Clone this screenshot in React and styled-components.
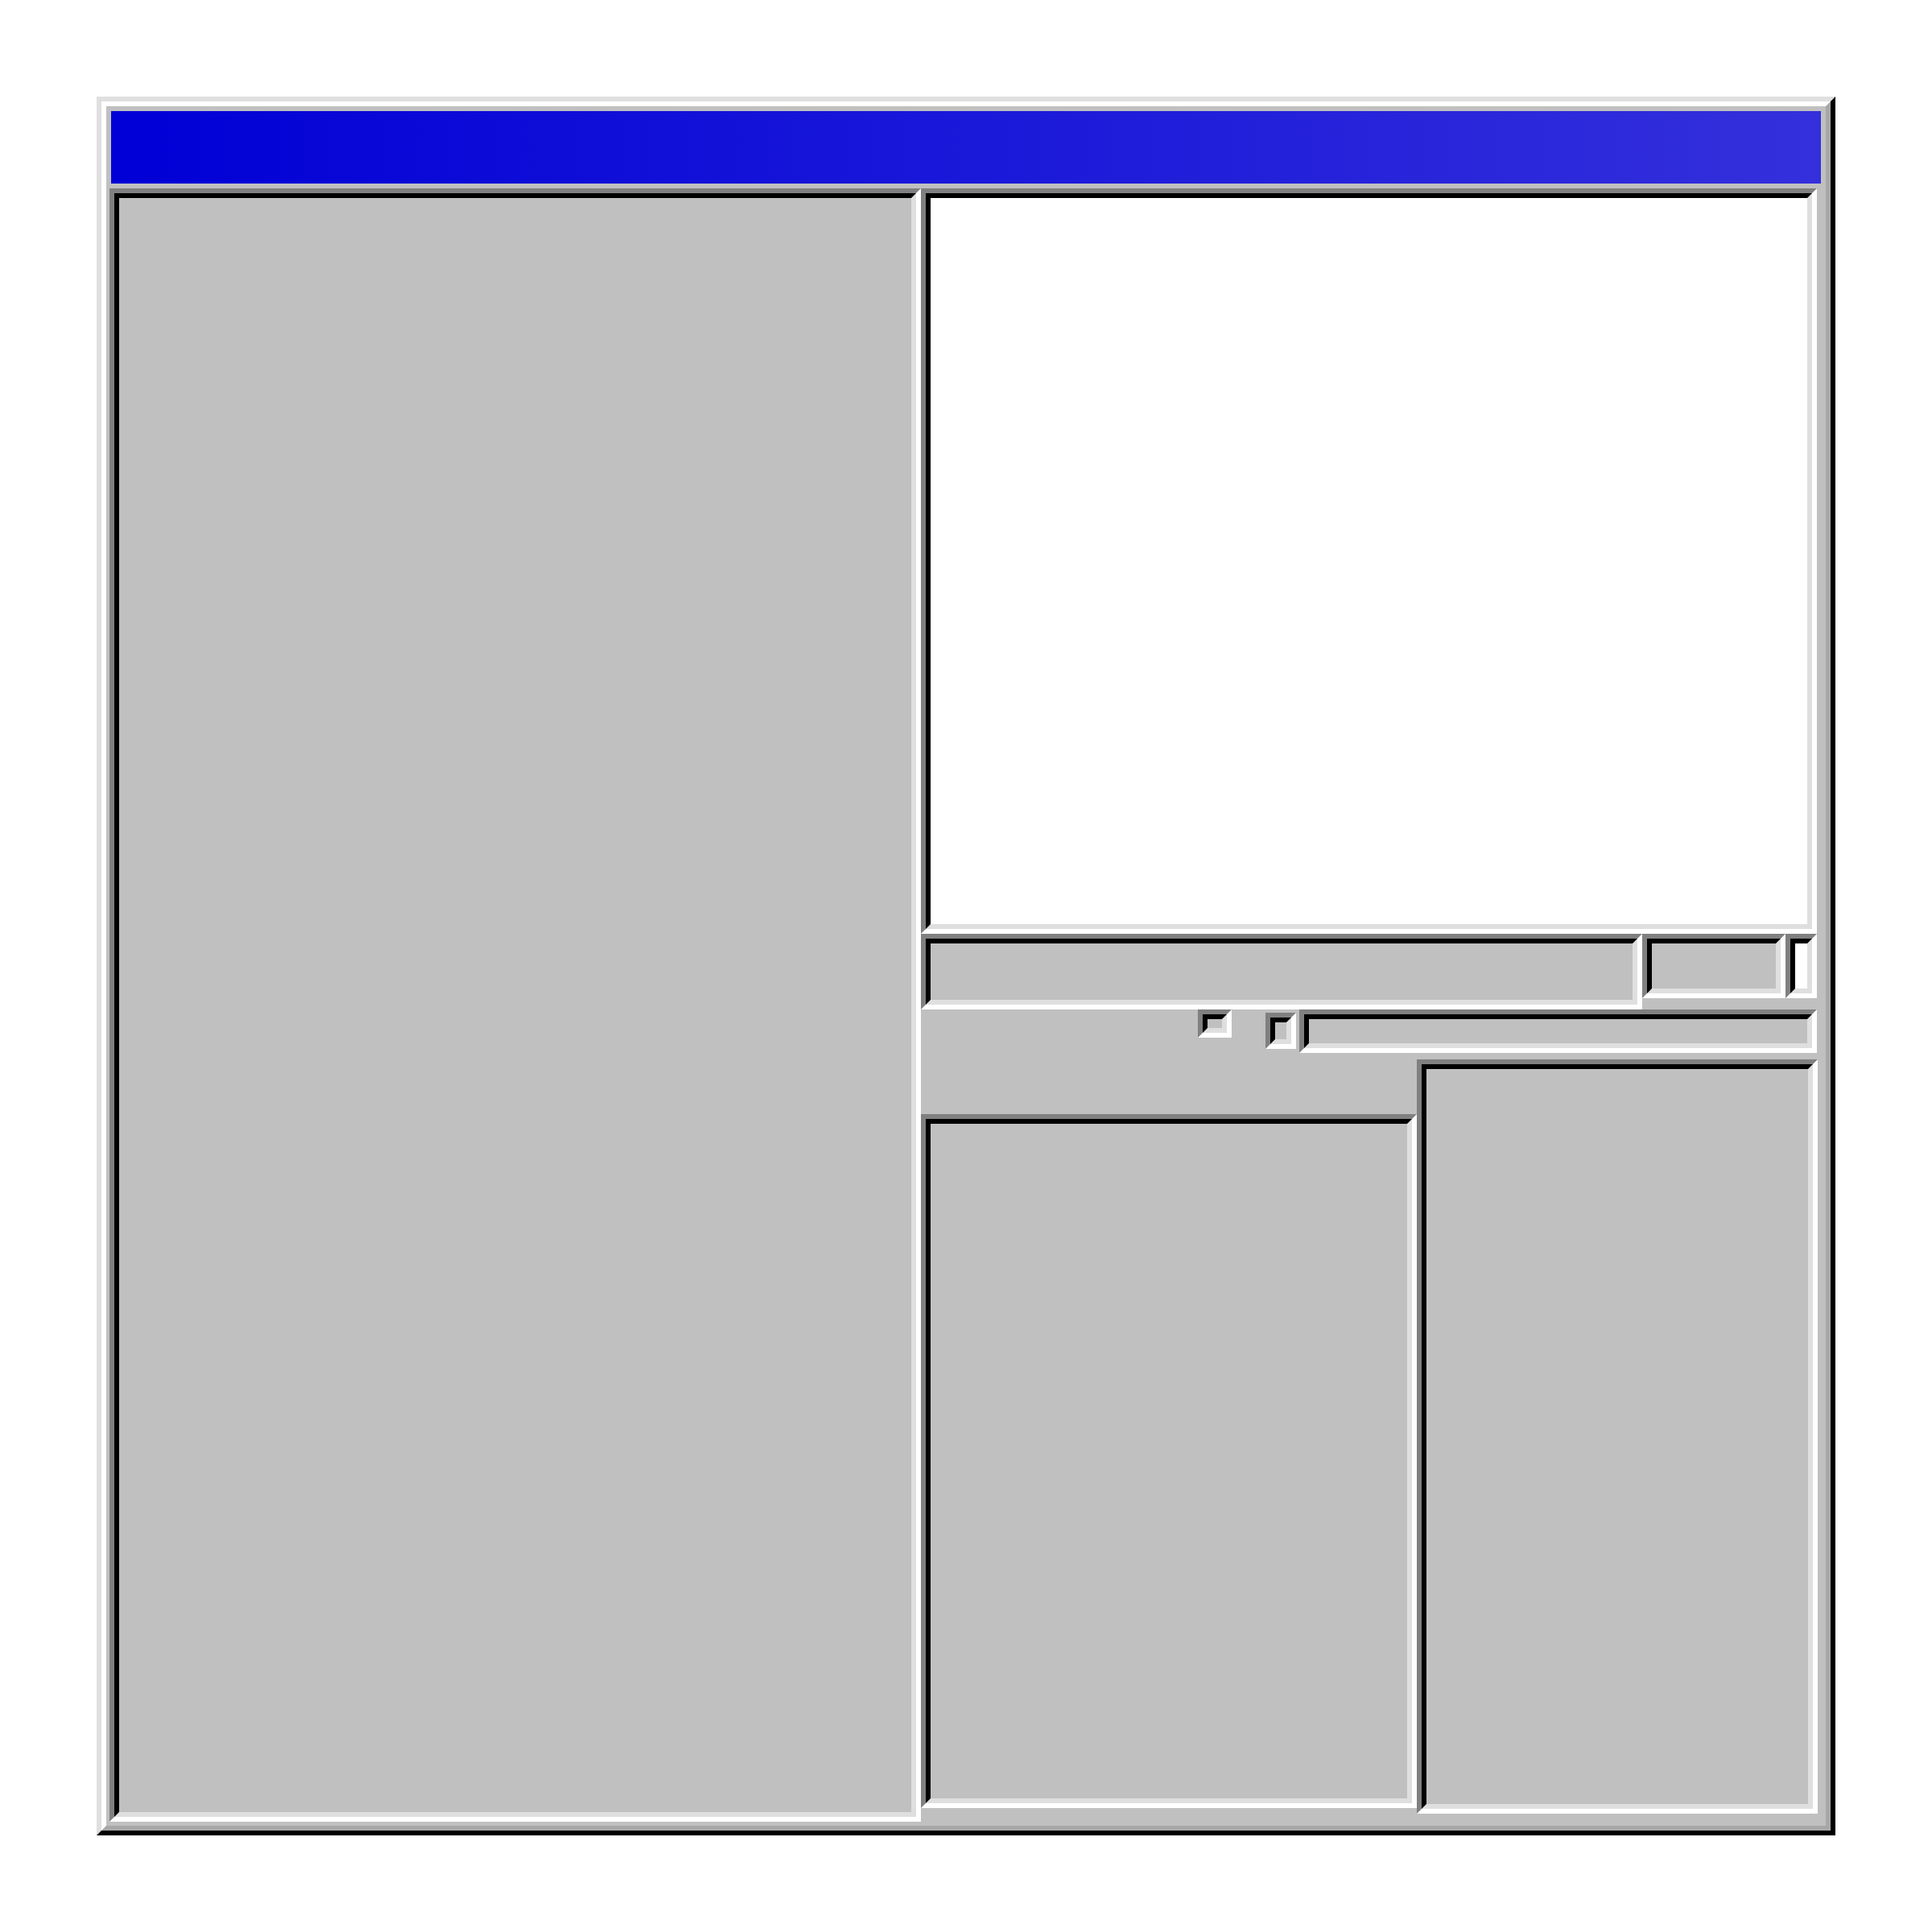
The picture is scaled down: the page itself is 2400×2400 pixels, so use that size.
import React from 'react';
import styled, { createGlobalStyle } from 'styled-components';

const GlobalStyle = createGlobalStyle`
  body {
    margin: 0;
    background: #fff;
    font-family: "Liberation Sans", Arial, sans-serif;
  }
`;

const Page = styled.div`
  padding: 120px;
`;

const WindowFrame = styled.div`
  box-sizing: border-box;
  display: flex;
  width: 2160px;
  height: 2160px;
  border: 6px solid;
  border-color: #dfdfdf #000 #000 #dfdfdf;
`;

const WindowInner = styled.div`
  flex: 1;
  display: flex;
  flex-direction: column;
  border: 6px solid;
  border-color: #fff #a8a8a8 #a8a8a8 #fff;
  background: #c0c0c0;
`;

const TitleBar = styled.div`
  height: 90px;
  margin: 6px 6px 0;
  background: linear-gradient(to right, #0000d6, #3430dc);
`;

const Body = styled.div`
  display: flex;
  padding: 6px 10px 5px 4px;
`;

const RightColumn = styled.div`
  display: flex;
  flex-direction: column;
  width: 1114px;
`;

const Row = styled.div`
  display: flex;
  align-items: flex-start;
  height: ${({ $h }) => ($h ? `${$h}px` : 'auto')};
  padding-left: ${({ $pl }) => $pl || 0}px;
`;

const FieldOuter = styled.div`
  box-sizing: border-box;
  display: flex;
  flex-shrink: 0;
  width: ${({ $w }) => $w}px;
  height: ${({ $h }) => $h}px;
  margin-top: ${({ $mt }) => $mt || 0}px;
  margin-left: ${({ $ml }) => $ml || 0}px;
  border: 6px solid;
  border-color: #808080 #fff #fff #808080;
`;

const FieldInner = styled.div`
  flex: 1;
  border: 6px solid;
  border-color: #000 #dfdfdf #dfdfdf #000;
  background: ${({ $bg }) => $bg || '#c0c0c0'};
`;

const Sunken = ({ w, h, mt, ml, bg, children }) => (
  <FieldOuter $w={w} $h={h} $mt={mt} $ml={ml}>
    <FieldInner $bg={bg}>{children}</FieldInner>
  </FieldOuter>
);

export default function App() {
  return (
    <Page>
      <GlobalStyle />
      <WindowFrame>
        <WindowInner>
          <TitleBar />
          <Body>
            <Sunken w={1008} h={2029} />
            <RightColumn>
              <Sunken w={1113} h={926} bg="#fff" />
              <Row>
                <Sunken w={896} h={94} />
                <Sunken w={178} h={80} />
                <Sunken w={39} h={80} bg="#fff" />
              </Row>
              <Row $h={54} $pl={344}>
                <Sunken w={42} h={35} />
                <Sunken w={38} h={45} mt={4} ml={42} />
                <Sunken w={643} h={54} ml={4} />
              </Row>
              <Row>
                <Sunken w={616} h={862} mt={76} />
                <Sunken w={498} h={937} mt={8} />
              </Row>
            </RightColumn>
          </Body>
        </WindowInner>
      </WindowFrame>
    </Page>
  );
}
